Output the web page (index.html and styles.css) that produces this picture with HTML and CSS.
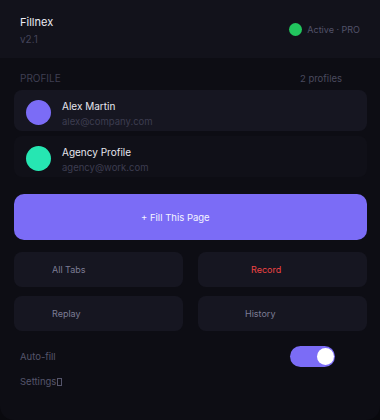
FILE: index.html
```html
<!DOCTYPE html>
<html lang="en">
<head>
<meta charset="utf-8">
<title>Fillnex</title>
<link rel="stylesheet" href="styles.css">
</head>
<body>
<div class="popup">
  <header class="header">
    <div class="brand">
      <div class="brand-name">Fillnex</div>
      <div class="brand-version">v2.1</div>
    </div>
    <div class="status">
      <span class="status-dot"></span>
      <span class="status-text">Active · PRO</span>
    </div>
  </header>

  <main class="main">
    <div class="section-head">
      <span>PROFILE</span>
      <span class="section-count">2 profiles</span>
    </div>

    <div class="profiles">
      <div class="profile profile-active">
        <span class="avatar avatar-purple"></span>
        <div class="profile-info">
          <div class="profile-name">Alex Martin</div>
          <div class="profile-email">alex@company.com</div>
        </div>
      </div>
      <div class="profile">
        <span class="avatar avatar-teal"></span>
        <div class="profile-info">
          <div class="profile-name">Agency Profile</div>
          <div class="profile-email">agency@work.com</div>
        </div>
      </div>
    </div>

    <button class="fill-btn">+ Fill This Page</button>

    <div class="actions">
      <button class="action action-alltabs">All Tabs</button>
      <button class="action action-record">Record</button>
      <button class="action action-replay">Replay</button>
      <button class="action action-history">History</button>
    </div>
  </main>

  <div class="setting-row">
    <span class="setting-label">Auto-fill</span>
    <span class="toggle"><span class="toggle-knob"></span></span>
  </div>
  <div class="settings-link">Settings<span class="tofu"></span></div>
</div>
</body>
</html>
```

FILE: styles.css
```css
html, body {
  margin: 0;
  padding: 0;
  background: #09090e;
}

body {
  width: 380px;
  height: 420px;
  overflow: hidden;
  font-family: Inter, "Noto Sans", sans-serif;
  font-size: 10px;
  color: #e4e4ec;
}

.popup {
  width: 380px;
  height: 420px;
  background: #0d0d14;
  border-radius: 0 0 14px 14px;
  overflow: hidden;
}

.header {
  height: 58px;
  box-sizing: border-box;
  background: #12121b;
  display: flex;
  align-items: center;
  justify-content: space-between;
  padding: 0 20px 0 20px;
}

.brand {
  padding-top: 3px;
}

.brand-name {
  font-size: 11px;
  line-height: 14px;
  color: #ececf3;
}

.brand-version {
  font-size: 10px;
  line-height: 14px;
  margin-top: 3px;
  color: #44445a;
}

.status {
  display: flex;
  align-items: center;
  gap: 5px;
}

.status-dot {
  width: 13px;
  height: 13px;
  border-radius: 50%;
  background: #22c55e;
}

.status-text {
  font-size: 9px;
  color: #53536a;
}

.main {
  padding: 13px 13px 0 14px;
}

.section-head {
  display: flex;
  justify-content: space-between;
  margin: 0 25px 0 6px;
  font-size: 10px;
  line-height: 15px;
  color: #3f3f52;
}

.section-count {
  font-size: 9.5px;
  color: #4a4a5e;
}

.profiles {
  margin-top: 4px;
  display: flex;
  flex-direction: column;
  gap: 5px;
}

.profile {
  height: 41px;
  box-sizing: border-box;
  padding: 10px 12px 0 12px;
  border-radius: 8px;
  background: #101018;
  display: flex;
  align-items: flex-start;
  gap: 11px;
}

.profile-active {
  background: #161621;
}

.avatar {
  width: 25px;
  height: 25px;
  border-radius: 50%;
  flex: none;
}

.avatar-purple {
  background: #7b6cf6;
}

.avatar-teal {
  background: #26e6b2;
}

.profile-name {
  font-size: 10px;
  line-height: 13px;
  color: #e6e6ee;
}

.profile-email {
  font-size: 9.5px;
  line-height: 13px;
  margin-top: 2px;
  color: #3d3d50;
}

.fill-btn {
  display: flex;
  align-items: center;
  width: 100%;
  height: 46px;
  margin-top: 17px;
  padding: 0 0 0 127px;
  border: none;
  border-radius: 10px;
  background: #7b6cf6;
  color: #f4f4ff;
  font-family: inherit;
  font-size: 9.5px;
}

.actions {
  margin-top: 12px;
  display: grid;
  grid-template-columns: 1fr 1fr;
  column-gap: 15px;
  row-gap: 9px;
}

.action {
  display: flex;
  align-items: center;
  height: 35px;
  border: none;
  border-radius: 8px;
  background: #161621;
  color: #7c7c94;
  font-family: inherit;
  font-size: 9px;
  padding: 0;
}

.action-alltabs,
.action-replay {
  padding-left: 38px;
}

.action-record {
  padding-left: 53px;
  color: #ef4444;
}

.action-history {
  padding-left: 47px;
}

.setting-row {
  display: flex;
  align-items: center;
  justify-content: space-between;
  padding: 0 45px 0 20px;
  margin-top: 15px;
  height: 21px;
}

.setting-label {
  font-size: 9.5px;
  color: #55556b;
}

.toggle {
  width: 45px;
  height: 21px;
  border-radius: 11px;
  background: #7b6cf6;
  display: flex;
  align-items: center;
  justify-content: flex-end;
  padding-right: 1px;
  box-sizing: border-box;
}

.toggle-knob {
  width: 17px;
  height: 17px;
  border-radius: 50%;
  background: #ffffff;
}

.settings-link {
  display: flex;
  align-items: center;
  margin: 7px 0 0 20px;
  font-size: 9.5px;
  line-height: 15px;
  color: #55556b;
}

.tofu {
  width: 3px;
  height: 6px;
  margin-left: 1px;
  border: 1px solid #55556b;
}
```
